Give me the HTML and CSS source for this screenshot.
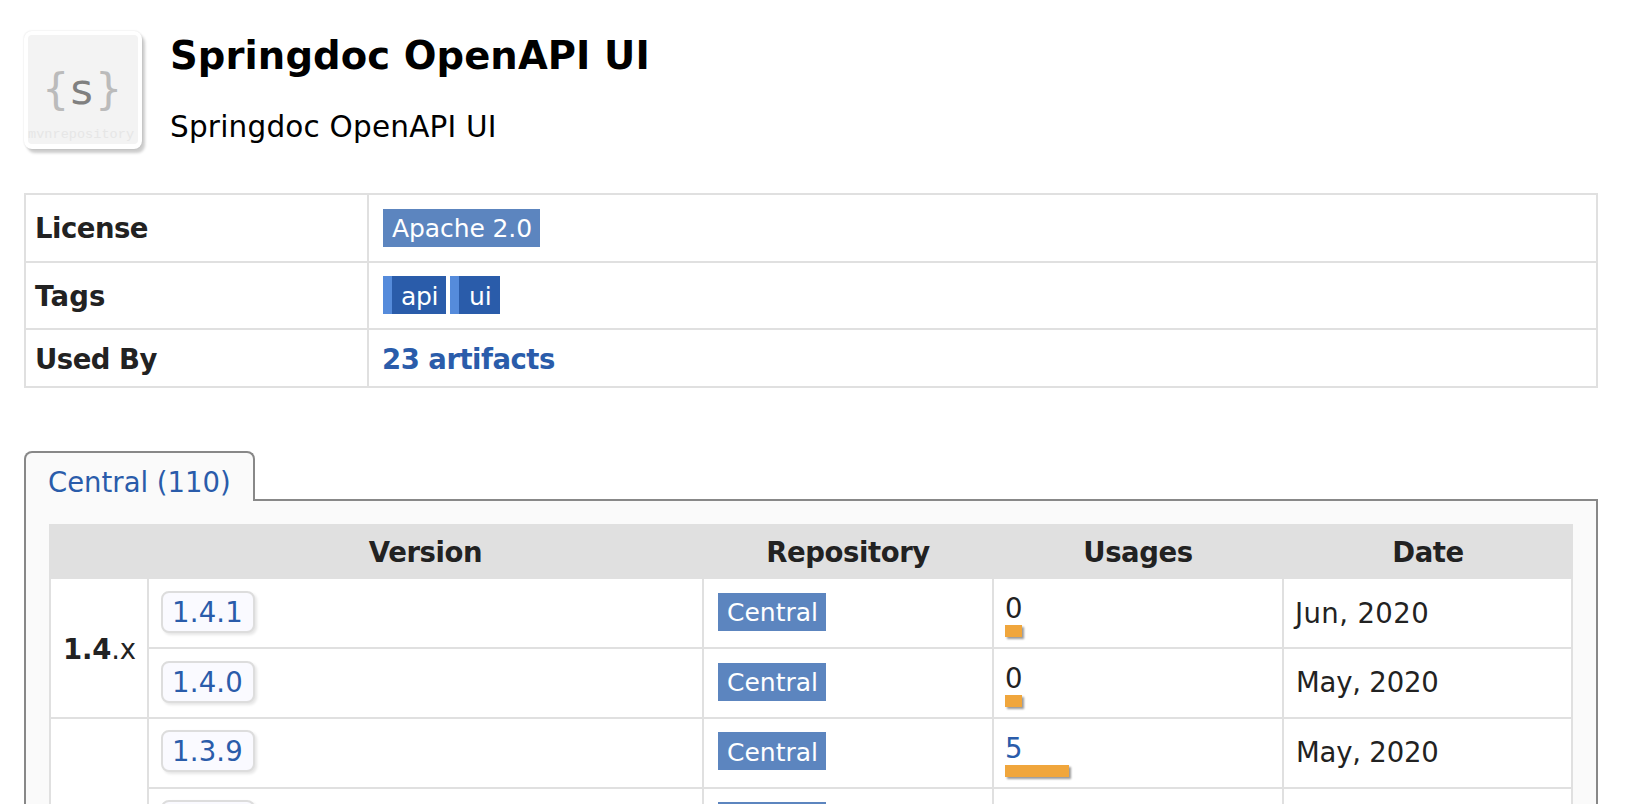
FILE: index.html
```html
<!DOCTYPE html>
<html lang="en">
<head>
<meta charset="utf-8">
<title>Springdoc OpenAPI UI</title>
<link rel="stylesheet" href="styles.css">
</head>
<body>
<header class="head">
  <svg class="logo" viewBox="0 0 118 118" width="118" height="118">
    <rect class="logo-bg" x="4" y="4" width="110" height="109" rx="4"/>
    <text class="brace" x="18" y="73">{</text>
    <text class="ess" x="46.500" y="73">s</text>
    <text class="brace" x="71" y="73">}</text>
    <text class="mark" x="4" y="107" textLength="106">mvnrepository</text>
  </svg>
  <div class="titles">
    <h1 class="title">Springdoc OpenAPI UI</h1>
    <p class="sub">Springdoc OpenAPI UI</p>
  </div>
</header>

<section class="info">
  <div class="info-row"><div class="label">License</div><div class="value"><span class="badge license">Apache 2.0</span></div></div>
  <div class="info-row"><div class="label tags-label">Tags</div><div class="value tags"><span class="tag api">api</span><span class="tag ui">ui</span></div></div>
  <div class="info-row last"><div class="label">Used By</div><div class="value"><a class="used">23 artifacts</a></div></div>
</section>

<nav class="tabs"><a class="tab">Central (110)</a></nav>
<main class="panel">
  <div class="thead">
    <div class="th version">Version</div><div class="th repo">Repository</div><div class="th usages">Usages</div><div class="th date">Date</div>
  </div>
  <div class="group">
    <div class="branch"><b>1.4</b>.x</div>
    <div class="rows">
      <div class="row">
        <div class="cell"><a class="ver">1.4.1</a></div>
        <div class="cell repo-cell"><span class="badge central">Central</span></div>
        <div class="cell use"><span>0</span><i class="bar" style="width:17px"></i></div>
        <div class="cell jun">Jun, 2020</div>
      </div>
      <div class="row">
        <div class="cell"><a class="ver">1.4.0</a></div>
        <div class="cell repo-cell"><span class="badge central">Central</span></div>
        <div class="cell use"><span>0</span><i class="bar" style="width:17px"></i></div>
        <div class="cell may">May, 2020</div>
      </div>
    </div>
  </div>
  <div class="group">
    <div class="branch"></div>
    <div class="rows">
      <div class="row">
        <div class="cell"><a class="ver">1.3.9</a></div>
        <div class="cell repo-cell"><span class="badge central">Central</span></div>
        <div class="cell use"><a>5</a><i class="bar" style="width:64px"></i></div>
        <div class="cell may">May, 2020</div>
      </div>
      <div class="row">
        <div class="cell"><a class="ver"></a></div>
        <div class="cell repo-cell"><span class="badge central"></span></div>
        <div class="cell"></div>
        <div class="cell"></div>
      </div>
    </div>
  </div>
</main>
</body>
</html>
```

FILE: styles.css
```css
* { box-sizing: border-box; }
html { overflow: hidden; }
body {
  margin: 0;
  padding: 31px 36px 0 24px;
  height: 804px;
  overflow: hidden;
  background: #fff;
  color: #222;
  font: 27.5px/32px Verdana, "DejaVu Sans", sans-serif;
  white-space: nowrap;
}
a { color: #2a5caa; }

.head { display: flex; gap: 28px; height: 162px; color: #000; }
.logo {
  flex: none;
  background: #fff;
  border-radius: 8px;
  box-shadow: 3px 4px 3px rgba(0, 0, 0, .2), 0 0 2px rgba(0, 0, 0, .14);
}
.logo-bg { fill: #f3f3f3; }
.brace { font: 43px "DejaVu Sans", sans-serif; fill: #bbb; }
.ess { font: 43px "DejaVu Sans", sans-serif; fill: #808080; }
.mark { font: 13.5px "Liberation Mono", monospace; fill: #e6e6e6; }
.title { margin: 2px 0 0; font-size: 38.5px; line-height: 46px; letter-spacing: .1px; }
.sub { margin: 30px 0 0; font-size: 29.5px; line-height: 36px; letter-spacing: .2px; }

.info { border: 2px solid #e0e0e0; height: 195px; }
.info-row { display: grid; grid-template-columns: 343px 1fr; height: 67.5px; border-bottom: 2px solid #e0e0e0; }
.info-row.last { height: 56px; border-bottom: 0; }
.label { display: flex; align-items: center; padding: 1px 0 0 9px; font-weight: bold; letter-spacing: -.5px; border-right: 2px solid #e0e0e0; }
.tags-label { letter-spacing: .2px; }
.value { display: flex; align-items: center; padding-left: 14px; }
.badge {
  display: inline-flex; align-items: center; height: 38px;
  padding: 3px 0 0 9px;
  background: #5c85bf; color: #fff; font-size: 25px;
}
.license { width: 157px; letter-spacing: -.1px; }
.central { width: 108px; height: 38px; margin-top: -3px; }
.tags { gap: 4px; }
.tag {
  display: flex; align-items: center; height: 38px;
  padding: 3px 0 0 9px;
  border-left: 9px solid #558bdb;
  background: #2a5caa; color: #fff; font-size: 25px;
}
.api { width: 63px; letter-spacing: -.4px; }
.ui { width: 50px; padding-left: 10px; }
.used { font-weight: bold; letter-spacing: -.5px; margin: 1px 0 0 -1px; }

.tabs { height: 48px; margin-top: 63px; }
.tab {
  position: relative; z-index: 1;
  display: block; width: 231px; height: 50px;
  padding: 13px 0 0 22px;
  background: #fafafa;
  border: 2px solid #888; border-bottom: 0;
  border-radius: 8px 8px 0 0;
}
.panel { height: 305px; overflow: hidden; padding: 23px 23px 0; background: #fafafa; border: 2px solid #888; border-bottom: 0; }
.thead { display: grid; grid-template-columns: 654px 290px 290px 290px; height: 55px; background: #e0e0e0; }
.th { padding-top: 12px; text-align: center; font-weight: bold; letter-spacing: -.4px; }
.version { padding-left: 99px; }
.group { display: grid; grid-template-columns: 98px 1fr; background: #fff; border-left: 2px solid #e0e0e0; }
.branch {
  display: flex; align-items: center; padding: 1px 0 0 12px;
  letter-spacing: -.2px;
  border: solid #e0e0e0; border-width: 0 2px 2px 0;
}
.row { display: grid; grid-template-columns: 555px 290px 290px 289px; height: 69.7px; }
.group:nth-child(2) .row:first-child { height: 70.4px; }
.cell {
  display: flex; align-items: center; padding-left: 12px;
  border: solid #e0e0e0; border-width: 0 2px 2px 0;
}
.repo-cell { padding-left: 14px; }
.jun { letter-spacing: .4px; padding: 0 0 1px 11px; }
.may { letter-spacing: -.2px; padding: 0 0 2px 12px; }
.ver {
  display: flex; align-items: center; width: 94px; height: 42px;
  padding-left: 9px; margin-top: -3px; letter-spacing: .2px;
  background: #fafaff; border: 2px solid #ddd; border-radius: 8px;
  box-shadow: 2px 2px 3px rgba(0, 0, 0, .1);
}
.use { flex-direction: column; align-items: flex-start; justify-content: flex-start; padding: 13px 0 0 11px; }
.bar { display: block; height: 12px; margin-top: 1px; background: #f0a63c; box-shadow: 2px 2px 2px rgba(0, 0, 0, .4); }
```
